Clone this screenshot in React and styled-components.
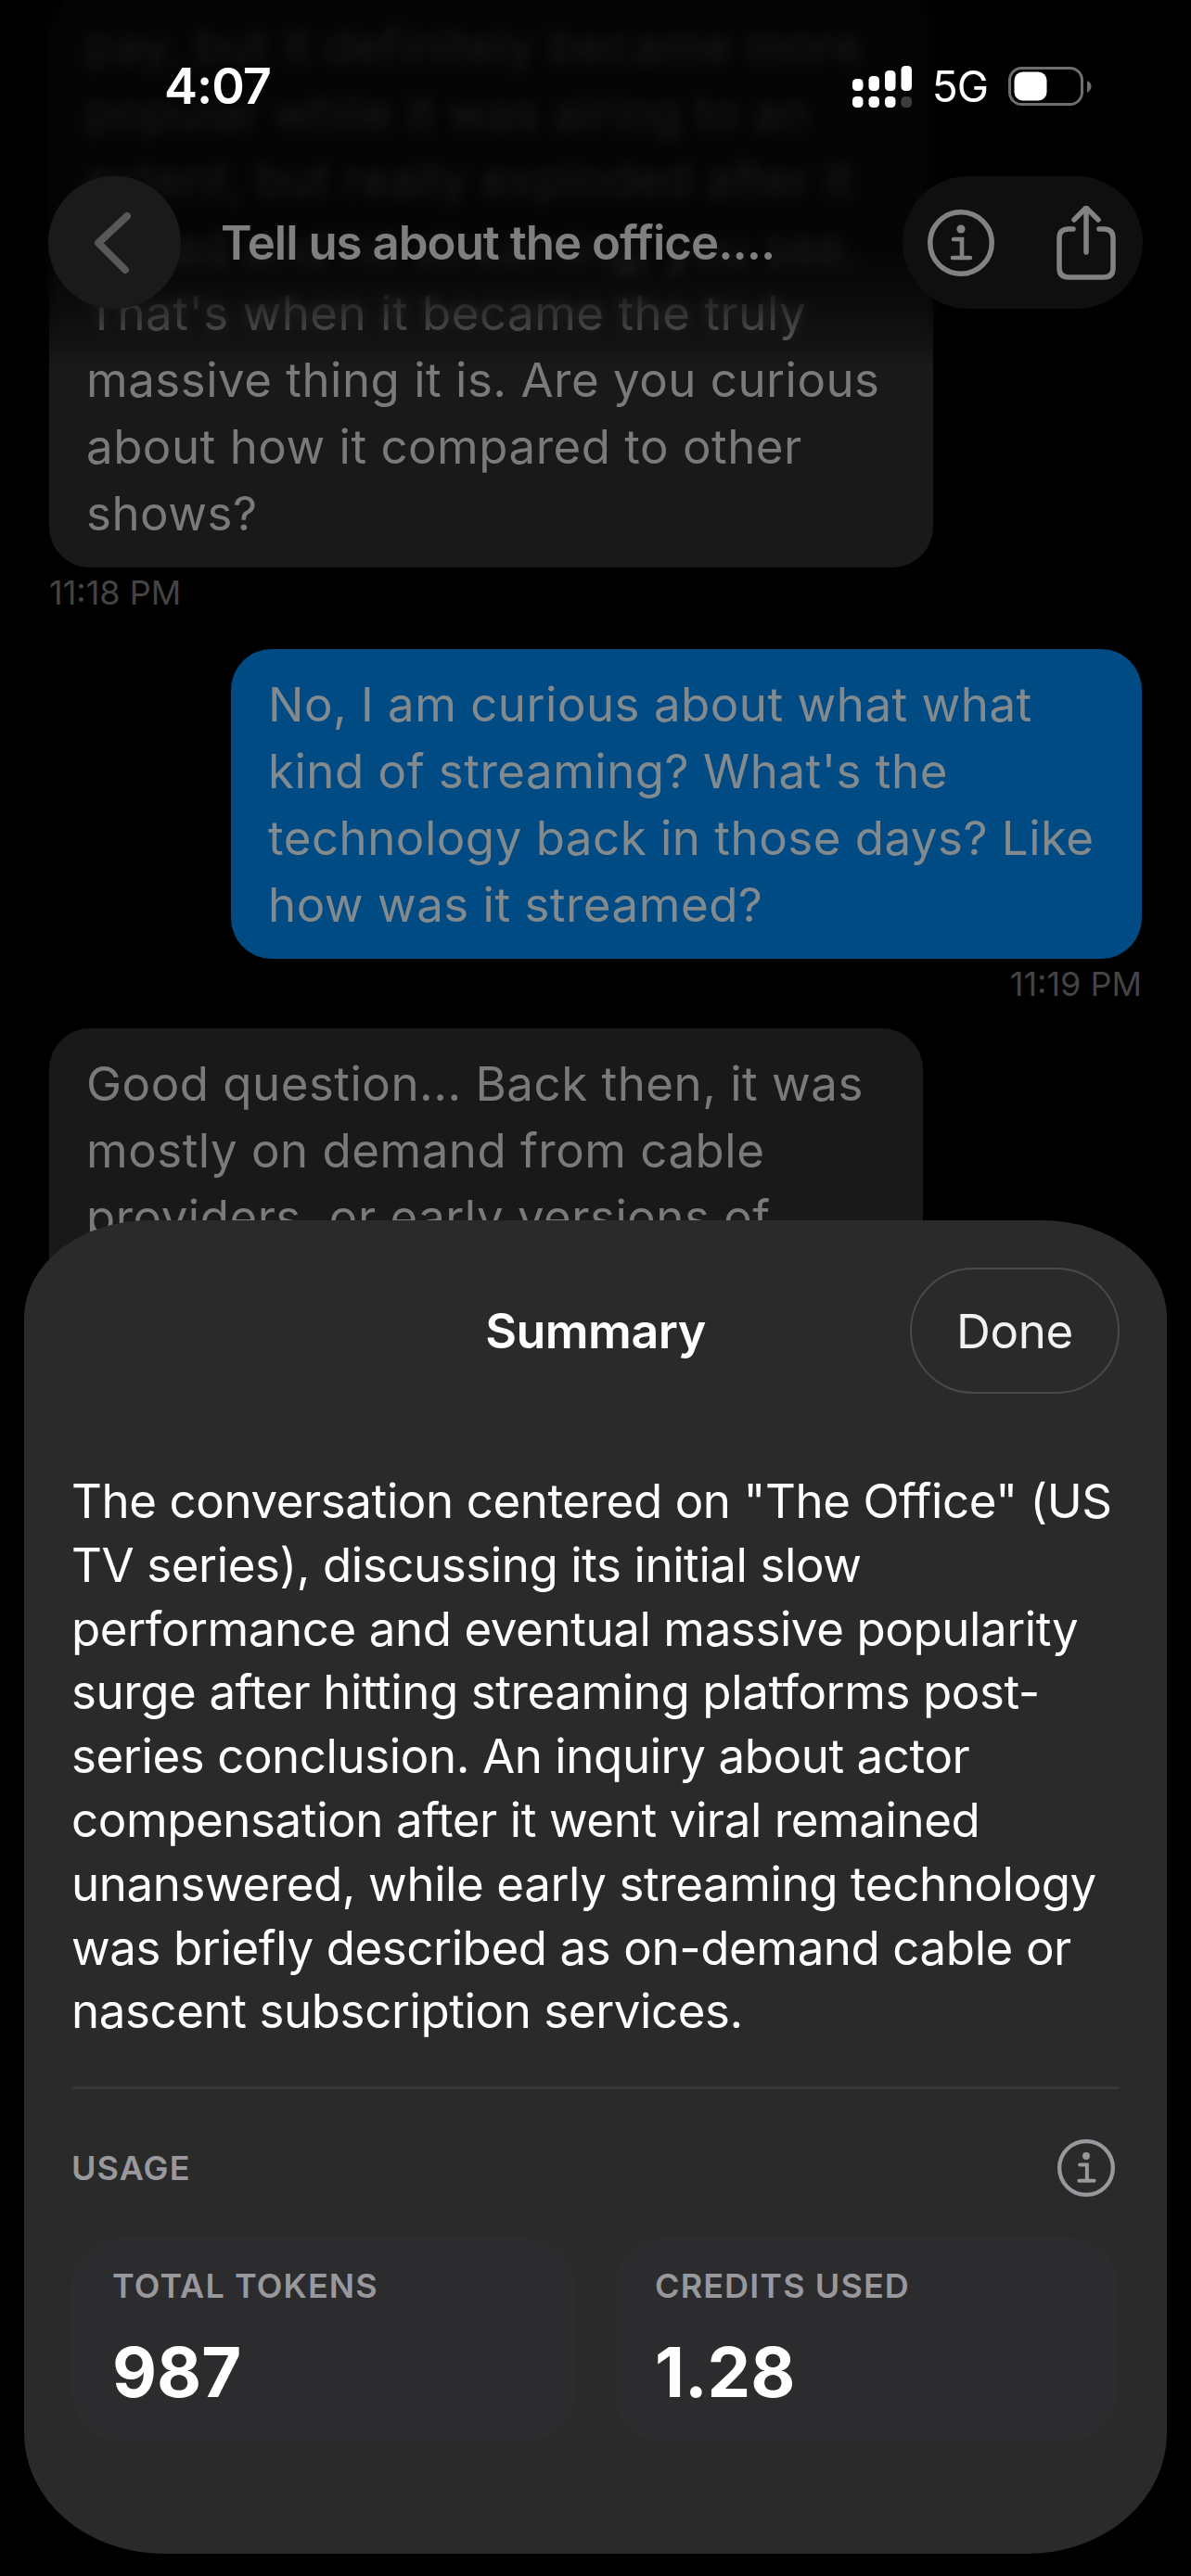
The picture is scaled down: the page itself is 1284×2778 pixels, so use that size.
import React from "react";
import styled, { createGlobalStyle } from "styled-components";

const Global = createGlobalStyle`
  html, body { margin: 0; padding: 0; background: #000; }
  * { box-sizing: border-box; }
`;

const Screen = styled.div`
  position: relative;
  width: 1284px;
  height: 2778px;
  overflow: hidden;
  background: #000;
  font-family: Inter, "Liberation Sans", sans-serif;
`;

const Chat = styled.div`
  display: flex;
  flex-direction: column;
  padding: 0 53px;
  margin-top: -10px;
`;

const Bubble = styled.div`
  width: ${(p) => p.$width}px;
  align-self: ${(p) => (p.$mine ? "flex-end" : "flex-start")};
  padding: 24px 40px 22px;
  border-radius: 44px;
  background: ${(p) => (p.$mine ? "#014b85" : "#191919")};
  color: ${(p) => (p.$mine ? "#828a8e" : "#7a7a7a")};
  font-size: 51px;
  letter-spacing: 0.5px;
  line-height: 72px;
`;

const Line = styled.div`
  white-space: nowrap;
`;

const Stamp = styled.div`
  align-self: ${(p) => (p.$mine ? "flex-end" : "flex-start")};
  margin: 9px 0 ${(p) => (p.$mine ? 30 : 43)}px;
  height: 36px;
  line-height: 36px;
  font-size: 36px;
  color: #444;
`;

const BlurLayer = styled.div`
  position: absolute;
  inset: 0 0 auto 0;
  height: 380px;
  backdrop-filter: blur(7px);
  mask-image: linear-gradient(to bottom, #000 0%, #000 78%, transparent 100%);
`;

const DimLayer = styled.div`
  position: absolute;
  inset: 0 0 auto 0;
  height: 395px;
  background: linear-gradient(
    to bottom,
    rgba(0, 0, 0, 0.8) 0%,
    rgba(0, 0, 0, 0.8) 68%,
    rgba(0, 0, 0, 0.42) 86%,
    rgba(0, 0, 0, 0) 100%
  );
`;

const Top = styled.div`
  position: absolute;
  inset: 0 0 auto 0;
`;

const StatusBar = styled.div`
  display: flex;
  justify-content: space-between;
  align-items: center;
  height: 56px;
  margin-top: 65px;
  padding: 0 107px 0 177px;
`;

const Time = styled.div`
  color: #fff;
  font-size: 54px;
  font-weight: 600;
  letter-spacing: -1px;
  line-height: 56px;
`;

const StatusRight = styled.div`
  display: flex;
  align-items: center;
`;

const Net = styled.div`
  color: #fff;
  font-size: 46px;
  font-weight: 400;
  letter-spacing: -1px;
  margin: 0 22px 0 22px;
`;

const NavBar = styled.div`
  display: flex;
  align-items: center;
  height: 143px;
  margin-top: 69px;
  padding: 0 52px;
`;

const BackButton = styled.div`
  width: 143px;
  height: 143px;
  border-radius: 50%;
  background: #1a1a1a;
  display: flex;
  align-items: center;
  justify-content: center;
  padding-right: 4px;
`;

const Title = styled.div`
  flex: 1;
  padding-left: 43px;
  color: #7f7f7f;
  font-size: 51px;
  font-weight: 600;
  letter-spacing: -1px;
  white-space: nowrap;
`;

const NavPill = styled.div`
  width: 259px;
  height: 143px;
  border-radius: 72px;
  background: #0f0f0f;
  display: flex;
  align-items: center;
  justify-content: space-between;
  padding: 0 29px 0 27px;
`;

const Sheet = styled.section`
  position: absolute;
  left: 26px;
  top: 1316px;
  width: 1232px;
  height: 1438px;
  padding: 51px 51px 0;
  border-radius: 135px 135px 150px 150px / 105px 105px 130px 130px;
  background: #2a2a2a;
`;

const SheetHead = styled.header`
  position: relative;
  display: flex;
  justify-content: center;
  align-items: center;
  height: 136px;
`;

const SheetTitle = styled.h2`
  margin: 0;
  color: #fff;
  font-size: 52px;
  font-weight: 600;
  letter-spacing: -0.5px;
`;

const Done = styled.button`
  position: absolute;
  right: 0;
  top: 0;
  width: 226px;
  height: 136px;
  border-radius: 68px;
  background: transparent;
  border: 2.5px solid #4a4a4a;
  color: #f2f2f2;
  font: 400 51px Inter, sans-serif;
  letter-spacing: -0.3px;
`;

const Body = styled.div`
  margin-top: 82px;
  color: #fff;
  font-size: 51px;
  line-height: 68.8px;
  letter-spacing: -0.4px;
  padding-bottom: 46px;
  border-bottom: 3px solid #363636;
`;

const UsageHead = styled.div`
  display: flex;
  justify-content: space-between;
  align-items: center;
  height: 64px;
  margin-top: 53px;
  padding-right: 5px;
`;

const UsageLabel = styled.div`
  color: #98989d;
  font-size: 36px;
  font-weight: 600;
  letter-spacing: 1.1px;
`;

const Cards = styled.div`
  display: grid;
  grid-template-columns: 543px 543px;
  gap: 42px;
  margin-top: 43px;
`;

const Card = styled.div`
  height: 220px;
  border-radius: 52px;
  background: #2c2c2e;
  padding: 32px 44px 0;
`;

const CardLabel = styled.div`
  color: #98989d;
  font-size: 36px;
  font-weight: 600;
  line-height: 40px;
  letter-spacing: 1.1px;
`;

const CardValue = styled.div`
  margin-top: 28px;
  color: #fff;
  font-size: 74px;
  font-weight: 700;
  line-height: 90px;
`;

const Signal = () => (
  <svg width="64" height="45" viewBox="0 0 64 45">
    {[14, 11, 5, 0].map((y, i) => (
      <rect key={i} x={i * 17.5} y={y} width="11.5" height={27 - y} rx="4.5" fill="#fff" />
    ))}
    {[0, 1, 2, 3].map((i) => (
      <rect key={i} x={i * 17.5} y="33" width="11.5" height="12" rx="4.5" fill={i === 3 ? "#3c3c3c" : "#fff"} />
    ))}
  </svg>
);

const Battery = () => (
  <svg width="90" height="42" viewBox="0 0 90 42">
    <rect x="1.5" y="1.5" width="78" height="39" rx="13" fill="none" stroke="#6e6e6e" strokeWidth="3" />
    <rect x="6.5" y="5.5" width="35" height="31" rx="9" fill="#fff" />
    <path d="M85 15 Q89.5 17 89.5 21 Q89.5 25 85 28 Z" fill="#6e6e6e" />
  </svg>
);

const Chevron = () => (
  <svg width="50" height="74" viewBox="0 0 50 74">
    <path d="M40 8 L9 37 L38 66" fill="none" stroke="#585858" strokeWidth="8" strokeLinecap="round" strokeLinejoin="round" />
  </svg>
);

const Info = ({ size, color, sw }) => (
  <svg width={size} height={size} viewBox="0 0 72 72">
    <circle cx="36" cy="36" r={36 - sw / 2} fill="none" stroke={color} strokeWidth={sw} />
    <circle cx="36" cy="21" r="4.6" fill={color} />
    <path d="M28 32 H37 V51 M27 52 H46" fill="none" stroke={color} strokeWidth="4.6" strokeLinecap="round" />
  </svg>
);

const Share = () => (
  <svg width="64" height="80" viewBox="0 0 64 80">
    <path d="M18 25 H13 Q3 25 3 35 V67 Q3 77 13 77 H51 Q61 77 61 67 V35 Q61 25 51 25 H46" fill="none" stroke="#828282" strokeWidth="5.5" strokeLinecap="round" />
    <path d="M32 50 V3 M19 15 L32 2 L45 15" fill="none" stroke="#828282" strokeWidth="5.5" strokeLinecap="round" strokeLinejoin="round" />
  </svg>
);

const Text = ({ lines }) => lines.map((l) => <Line key={l}>{l}</Line>);

export default function App() {
  return (
    <Screen>
      <Global />
      <Chat>
        <Bubble $width={953}>
          <Text
            lines={[
              "pay, but it definitely became more",
              "popular while it was airing to an",
              "extent, but really exploded after it",
              "ended and hit streaming, you see.",
              "That's when it became the truly",
              "massive thing it is. Are you curious",
              "about how it compared to other",
              "shows?",
            ]}
          />
        </Bubble>
        <Stamp>11:18 PM</Stamp>
        <Bubble $mine $width={982}>
          <Text
            lines={[
              "No, I am curious about what what",
              "kind of streaming? What's the",
              "technology back in those days? Like",
              "how was it streamed?",
            ]}
          />
        </Bubble>
        <Stamp $mine>11:19 PM</Stamp>
        <Bubble $width={942}>
          <Text
            lines={[
              "Good question... Back then, it was",
              "mostly on demand from cable",
              "providers, or early versions of",
              "subscription services.",
            ]}
          />
        </Bubble>
      </Chat>
      <BlurLayer />
      <DimLayer />
      <Top>
        <StatusBar>
          <Time>4:07</Time>
          <StatusRight>
            <Signal />
            <Net>5G</Net>
            <Battery />
          </StatusRight>
        </StatusBar>
        <NavBar>
          <BackButton>
            <Chevron />
          </BackButton>
          <Title>Tell us about the office....</Title>
          <NavPill>
            <Info size={72} color="#828282" sw={5.5} />
            <Share />
          </NavPill>
        </NavBar>
      </Top>
      <Sheet>
        <SheetHead>
          <SheetTitle>Summary</SheetTitle>
          <Done>Done</Done>
        </SheetHead>
        <Body>
          <Text
            lines={[
              'The conversation centered on "The Office" (US',
              "TV series), discussing its initial slow",
              "performance and eventual massive popularity",
              "surge after hitting streaming platforms post-",
              "series conclusion. An inquiry about actor",
              "compensation after it went viral remained",
              "unanswered, while early streaming technology",
              "was briefly described as on-demand cable or",
              "nascent subscription services.",
            ]}
          />
        </Body>
        <UsageHead>
          <UsageLabel>USAGE</UsageLabel>
          <Info size={62} color="#98989d" sw={5} />
        </UsageHead>
        <Cards>
          <Card>
            <CardLabel>TOTAL TOKENS</CardLabel>
            <CardValue>987</CardValue>
          </Card>
          <Card>
            <CardLabel>CREDITS USED</CardLabel>
            <CardValue>1.28</CardValue>
          </Card>
        </Cards>
      </Sheet>
    </Screen>
  );
}
